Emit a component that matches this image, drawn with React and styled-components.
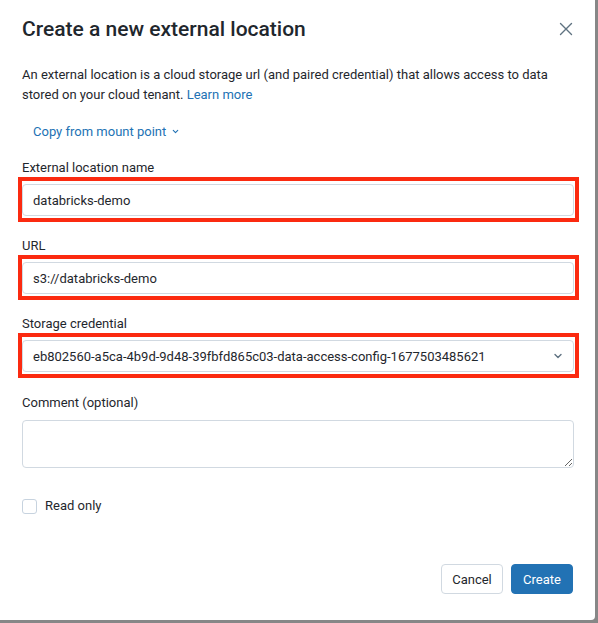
import React, { useState } from 'react';
import styled, { createGlobalStyle } from 'styled-components';

const GlobalStyle = createGlobalStyle`
  html, body {
    margin: 0;
    padding: 0;
    background: #878787;
  }
  body {
    font-family: Roboto, "Liberation Sans", Arial, sans-serif;
    color: #1f272d;
    -webkit-font-smoothing: antialiased;
  }
  * {
    box-sizing: border-box;
  }
`;

const App = () => {
  const [name, setName] = useState('databricks-demo');
  const [url, setUrl] = useState('s3://databricks-demo');
  const [comment, setComment] = useState('');
  const [readOnly, setReadOnly] = useState(false);

  return (
    <>
      <GlobalStyle />
      <Modal>
        <Header>
          <Title>Create a new external location</Title>
          <CloseButton aria-label="Close">
            <svg width="14" height="14" viewBox="0 0 14 14" fill="none">
              <path d="M1.5 1.5L12.5 12.5M12.5 1.5L1.5 12.5" stroke="#5f7281" strokeWidth="1.4" strokeLinecap="round" />
            </svg>
          </CloseButton>
        </Header>

        <Body>
          <Description>
            An external location is a cloud storage url (and paired credential) that allows access to data
            <br />
            stored on your cloud tenant. <Link href="#">Learn more</Link>
          </Description>

          <CopyButton type="button">
            Copy from mount point
            <svg width="9" height="9" viewBox="0 0 10 10" fill="none">
              <path d="M2.5 3.8L5 6.3L7.5 3.8" stroke="#2272b4" strokeWidth="1.2" strokeLinecap="round" strokeLinejoin="round" />
            </svg>
          </CopyButton>

          <Form>
            <Field>
              <Label>External location name</Label>
              <Highlight>
                <Input type="text" value={name} onChange={(e) => setName(e.target.value)} />
              </Highlight>
            </Field>

            <Field>
              <Label>URL</Label>
              <Highlight>
                <Input type="text" value={url} onChange={(e) => setUrl(e.target.value)} />
              </Highlight>
            </Field>

            <Field>
              <Label>Storage credential</Label>
              <Highlight>
                <Select>
                  <SelectValue>eb802560-a5ca-4b9d-9d48-39fbfd865c03-data-access-config-1677503485621</SelectValue>
                  <svg width="12" height="12" viewBox="0 0 12 12" fill="none">
                    <path d="M3 4.5L6 7.5L9 4.5" stroke="#5f7281" strokeWidth="1.4" strokeLinecap="round" strokeLinejoin="round" />
                  </svg>
                </Select>
              </Highlight>
            </Field>

            <Field $spaced>
              <Label>Comment (optional)</Label>
              <TextArea value={comment} onChange={(e) => setComment(e.target.value)} />
            </Field>
          </Form>

          <CheckRow>
            <CheckBox type="checkbox" checked={readOnly} onChange={(e) => setReadOnly(e.target.checked)} />
            <span>Read only</span>
          </CheckRow>
        </Body>

        <Footer>
          <Button>Cancel</Button>
          <Button $primary>Create</Button>
        </Footer>
      </Modal>
    </>
  );
};

export default App;

const Modal = styled.div`
  display: flex;
  flex-direction: column;
  width: 595px;
  height: 620px;
  background: #ffffff;
  border-bottom-right-radius: 4px;
`;

const Header = styled.div`
  display: flex;
  align-items: center;
  justify-content: space-between;
  padding: 14px 21px 0 22px;
`;

const Title = styled.h1`
  margin: 0;
  font-size: 21px;
  line-height: 30px;
  font-weight: 500;
  color: #1f272d;
`;

const CloseButton = styled.button`
  display: flex;
  align-items: center;
  justify-content: center;
  width: 28px;
  height: 28px;
  margin-right: -6px;
  padding: 0;
  border: none;
  background: transparent;
  cursor: pointer;
`;

const Body = styled.div`
  display: flex;
  flex-direction: column;
  flex: 1;
  padding: 21px 21px 0 22px;
`;

const Description = styled.p`
  margin: 0;
  font-size: 13px;
  line-height: 20px;
  color: #1f272d;
`;

const Link = styled.a`
  color: #2272b4;
  text-decoration: none;
`;

const CopyButton = styled.button`
  display: flex;
  align-items: center;
  gap: 5px;
  align-self: flex-start;
  height: 32px;
  margin-top: 10px;
  padding: 0 11px;
  border: none;
  background: transparent;
  color: #2272b4;
  font-family: inherit;
  font-size: 13px;
  cursor: pointer;
`;

const Form = styled.div`
  display: flex;
  flex-direction: column;
  gap: 20px;
  margin-top: 11px;
`;

const Field = styled.div`
  display: flex;
  flex-direction: column;
  gap: ${({ $spaced }) => ($spaced ? '7px' : '6px')};
  margin-top: ${({ $spaced }) => ($spaced ? '1px' : '0')};
`;

const Label = styled.label`
  font-size: 13px;
  line-height: 20px;
  font-weight: 400;
  color: #1f272d;
`;

const Highlight = styled.div`
  position: relative;

  &::after {
    content: '';
    position: absolute;
    inset: -7px -5px -6px -4px;
    border: 4px solid #fb2a10;
    pointer-events: none;
  }
`;

const Input = styled.input`
  display: block;
  width: 100%;
  height: 32px;
  padding: 0 10px;
  border: 1px solid #d1d9e1;
  border-radius: 4px;
  font-family: inherit;
  font-size: 13px;
  color: #1f272d;
  outline: none;
`;

const Select = styled.div`
  display: flex;
  align-items: center;
  justify-content: space-between;
  height: 32px;
  padding: 0 9px 0 10px;
  border: 1px solid #d1d9e1;
  border-radius: 4px;
  font-size: 13px;
`;

const SelectValue = styled.span`
  white-space: nowrap;
  overflow: hidden;
`;

const TextArea = styled.textarea`
  display: block;
  width: 100%;
  height: 48px;
  padding: 6px 10px;
  border: 1px solid #d1d9e1;
  border-radius: 4px;
  font-family: inherit;
  font-size: 13px;
  resize: vertical;
  outline: none;
`;

const CheckRow = styled.label`
  display: flex;
  align-items: center;
  gap: 8px;
  margin-top: 28px;
  font-size: 13px;
  line-height: 20px;
`;

const CheckBox = styled.input`
  appearance: none;
  width: 15px;
  height: 15px;
  margin: 0;
  border: 1px solid #c7d3df;
  border-radius: 3px;
  background: #ffffff;
`;

const Footer = styled.div`
  display: flex;
  justify-content: flex-end;
  gap: 8px;
  padding: 0 22px 26px;
`;

const Button = styled.button`
  height: 30px;
  min-width: 62px;
  padding: 0 10px;
  border: 1px solid ${({ $primary }) => ($primary ? '#2272b4' : '#d1d9e1')};
  border-radius: 4px;
  background: ${({ $primary }) => ($primary ? '#2272b4' : '#ffffff')};
  color: ${({ $primary }) => ($primary ? '#ffffff' : '#1f272d')};
  font-family: inherit;
  font-size: 13px;
  cursor: pointer;
`;
